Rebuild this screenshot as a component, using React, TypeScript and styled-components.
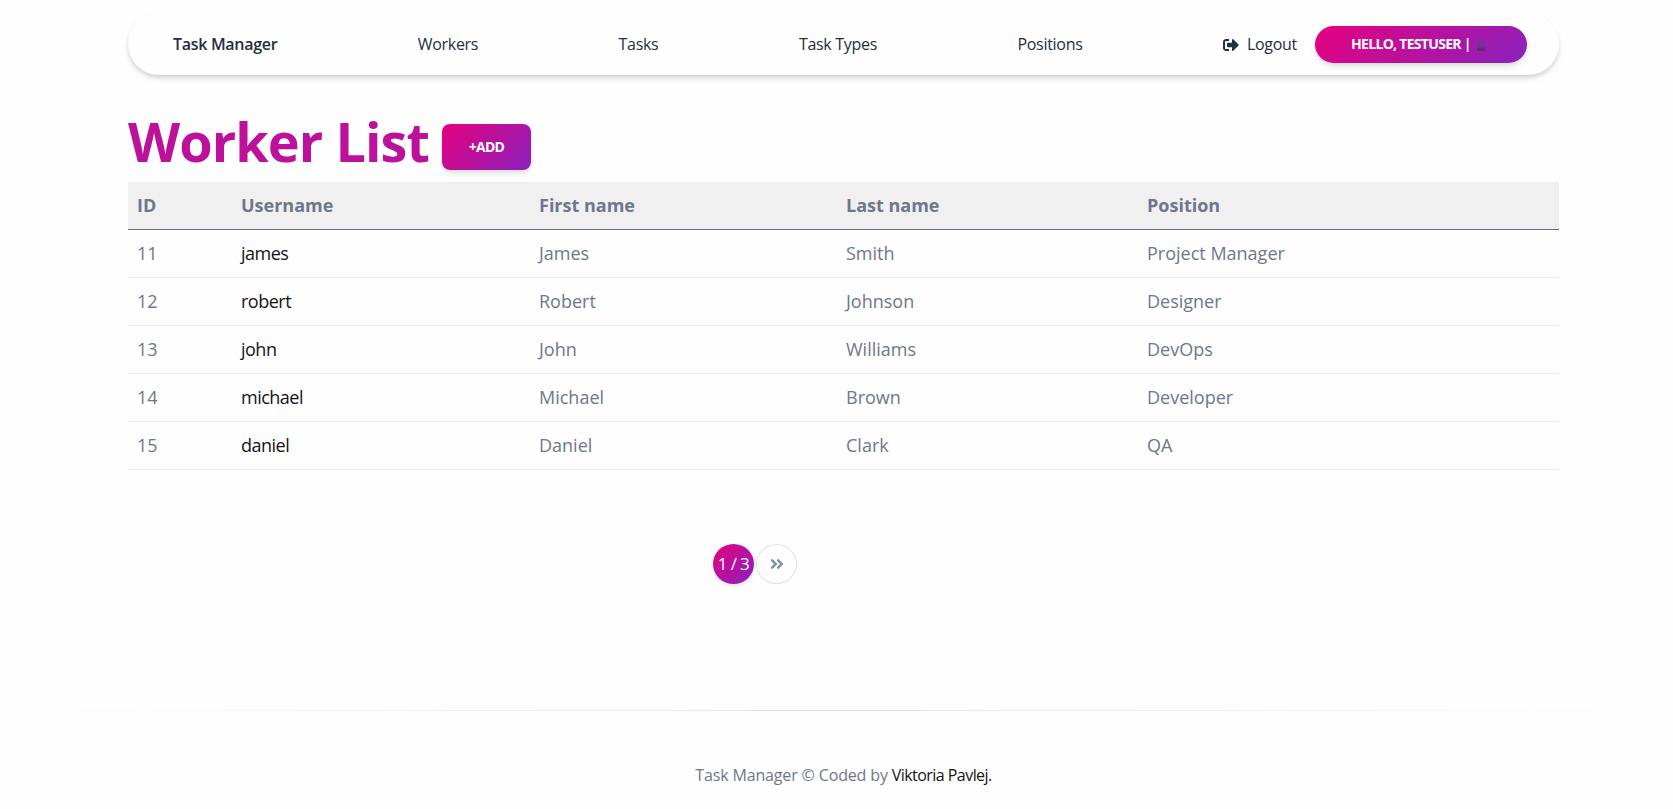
import React from "react";
import styled, { createGlobalStyle } from "styled-components";
import { FaAngleDoubleRight, FaSignOutAlt } from "react-icons/fa";

const gradient = "linear-gradient(135deg, #e6007e 0%, #8a22bd 100%)";

const GlobalStyle = createGlobalStyle`
  *, *::before, *::after { box-sizing: border-box; }
  body {
    margin: 0;
    background: #fefefe;
    color: #6e778b;
    font-family: "Open Sans", "Noto Sans", sans-serif;
    font-size: 16px;
    line-height: 1.6;
    overflow: hidden;
  }
  a { color: inherit; text-decoration: none; }
`;

const Page = styled.div`
  display: flex;
  flex-direction: column;
  height: 809px;
`;

const Container = styled.div`
  width: 1431px;
  margin-left: 128px;
`;

const Navbar = styled.nav`
  display: flex;
  align-items: center;
  justify-content: space-between;
  height: 62px;
  margin-top: 13px;
  padding: 0 32px 0 45px;
  border-radius: 31px;
  background: #fefefe;
  box-shadow: 0 4px 6px -1px rgba(20, 20, 20, 0.12), 0 2px 4px -1px rgba(20, 20, 20, 0.14);
`;

const NavLink = styled.a<{ $brand?: boolean }>`
  padding-top: 2px;
  color: #252f40;
  font-size: 16px;
  font-weight: ${(p) => (p.$brand ? 600 : 400)};
  letter-spacing: -0.3px;
  white-space: nowrap;
`;

const UserArea = styled.div`
  display: flex;
  align-items: center;
  gap: 18px;
`;

const LogoutLink = styled(NavLink)`
  display: flex;
  align-items: center;
  gap: 8px;
`;

const GradientButton = styled.a<{ $pill?: boolean }>`
  display: flex;
  align-items: center;
  justify-content: center;
  gap: 5px;
  width: ${(p) => (p.$pill ? "212px" : "89px")};
  height: ${(p) => (p.$pill ? "37px" : "46px")};
  padding: ${(p) => (p.$pill ? "1px 5px 0 0" : "1px 0 0")};
  border-radius: ${(p) => (p.$pill ? "19px" : "8px")};
  background: ${gradient};
  box-shadow: 0 4px 7px -1px rgba(0, 0, 0, 0.11), 0 2px 4px -1px rgba(0, 0, 0, 0.07);
  color: #fff;
  font-size: 14px;
  font-weight: 700;
  letter-spacing: -0.7px;
  white-space: nowrap;
`;

const TitleRow = styled.header`
  display: flex;
  align-items: flex-end;
  gap: 13px;
  height: 59px;
  margin: 36px 0 12px;
`;

const Title = styled.h1`
  margin: 0;
  padding-bottom: 1px;
  color: #be119b;
  font-size: 54px;
  font-weight: 700;
  letter-spacing: -0.95px;
  line-height: 56px;
  white-space: nowrap;
`;

const Table = styled.table`
  width: 100%;
  table-layout: fixed;
  border-collapse: separate;
  border-spacing: 0;
  font-size: 18px;
  line-height: 27px;
`;

const HeadCell = styled.th<{ $width?: number }>`
  width: ${(p) => (p.$width ? `${p.$width}px` : "auto")};
  height: 48px;
  padding: 0 8px 0 9px;
  border-bottom: 1px solid #67708a;
  background: #f0f0f0;
  font-weight: 700;
  text-align: left;
`;

const Cell = styled.td<{ $strong?: boolean }>`
  height: 48px;
  padding: 0 8px 0 9px;
  border-bottom: 1px solid #ebecee;
  color: ${(p) => (p.$strong ? "#141414" : "inherit")};
  letter-spacing: ${(p) => (p.$strong ? "-0.5px" : "normal")};
`;

const Pagination = styled.div`
  display: flex;
  gap: 2px;
  margin: 74px 0 0 585px;
`;

const PageItem = styled.a<{ $active?: boolean }>`
  display: flex;
  align-items: center;
  justify-content: center;
  width: 41px;
  height: 40px;
  border: ${(p) => (p.$active ? "none" : "1px solid #dee2e6")};
  border-radius: 50%;
  background: ${(p) => (p.$active ? gradient : "#fefefe")};
  box-shadow: ${(p) => (p.$active ? "0 3px 5px -1px rgba(0, 0, 0, 0.12)" : "none")};
  color: ${(p) => (p.$active ? "#fff" : "#8392ab")};
  font-size: 17px;
  letter-spacing: -0.6px;
`;

const Divider = styled.hr`
  width: 100%;
  height: 1px;
  margin: 126px 0 0;
  border: 0;
  background: linear-gradient(90deg, transparent, rgba(0, 0, 0, 0.11), transparent);
`;

const Footer = styled.footer`
  width: 1431px;
  margin: 52px 0 0 128px;
  letter-spacing: -0.15px;
  text-align: center;
`;

const Author = styled.a`
  color: #141414;
  letter-spacing: -0.55px;
`;

const BustIcon = () => (
  <svg width="10" height="14" viewBox="0 0 10 14">
    <path d="M5 1c1.600 0 2.500 1.300 2.700 3l.4 3.500L9 9.500V13H1V9.500l.9-2L2.300 4C2.500 2.300 3.400 1 5 1z" fill="#71329a" />
    <path d="M1 10l2-.8 2 .8 2-.8 2 .8v3H1z" fill="#55306f" />
  </svg>
);

const columns = [
  { label: "ID", width: 104 },
  { label: "Username", width: 298 },
  { label: "First name", width: 307 },
  { label: "Last name", width: 301 },
  { label: "Position" },
];

const workers = [
  ["11", "james", "James", "Smith", "Project Manager"],
  ["12", "robert", "Robert", "Johnson", "Designer"],
  ["13", "john", "John", "Williams", "DevOps"],
  ["14", "michael", "Michael", "Brown", "Developer"],
  ["15", "daniel", "Daniel", "Clark", "QA"],
];

export default function App() {
  return (
    <Page>
      <GlobalStyle />
      <Container>
        <Navbar>
          <NavLink $brand>Task Manager</NavLink>
          <NavLink>Workers</NavLink>
          <NavLink>Tasks</NavLink>
          <NavLink>Task Types</NavLink>
          <NavLink>Positions</NavLink>
          <UserArea>
            <LogoutLink>
              <FaSignOutAlt size={16} />
              Logout
            </LogoutLink>
            <GradientButton $pill>
              HELLO, TESTUSER |
              <BustIcon />
            </GradientButton>
          </UserArea>
        </Navbar>
        <TitleRow>
          <Title>Worker List</Title>
          <GradientButton>+ADD</GradientButton>
        </TitleRow>
        <Table>
          <thead>
            <tr>
              {columns.map((c) => (
                <HeadCell key={c.label} $width={c.width}>{c.label}</HeadCell>
              ))}
            </tr>
          </thead>
          <tbody>
            {workers.map((row) => (
              <tr key={row[0]}>
                {row.map((value, i) => (
                  <Cell key={i} $strong={i === 1}>{value}</Cell>
                ))}
              </tr>
            ))}
          </tbody>
        </Table>
        <Pagination>
          <PageItem $active>1 / 3</PageItem>
          <PageItem><FaAngleDoubleRight size={16} /></PageItem>
        </Pagination>
      </Container>
      <Divider />
      <Footer>
        Task Manager © Coded by <Author>Viktoria Pavlej.</Author>
      </Footer>
    </Page>
  );
}
